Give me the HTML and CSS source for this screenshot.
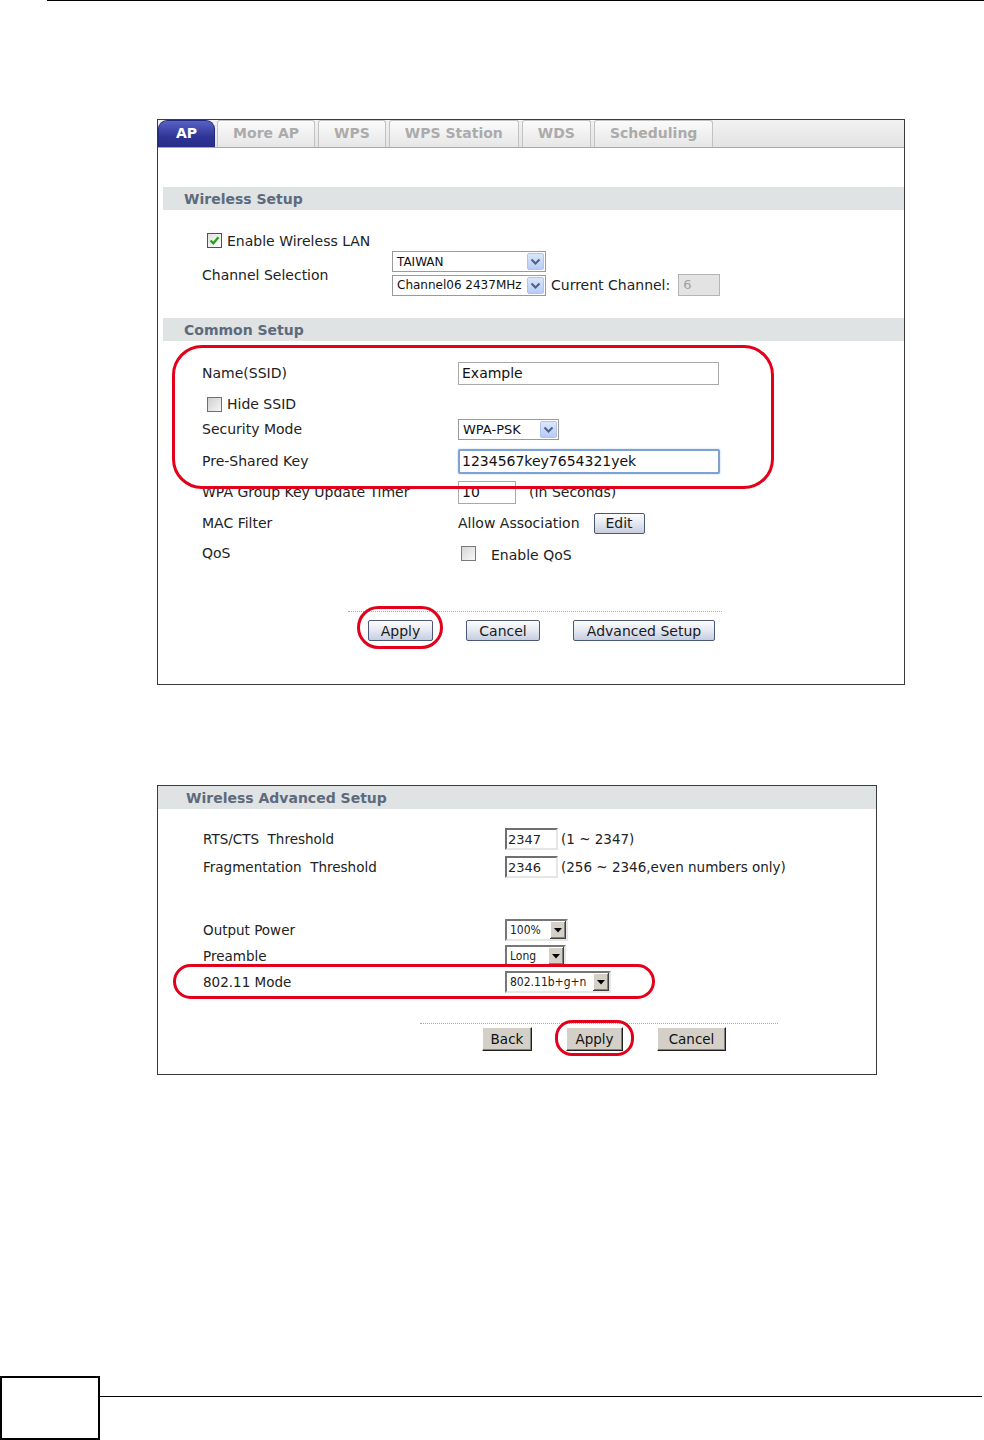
FILE: index.html
```html
<!DOCTYPE html>
<html>
<head>
<meta charset="utf-8">
<link rel="stylesheet" href="styles.css">
</head>
<body>
<div class="topline"></div>

<div class="panel p1">
  <div class="tabs">
    <div class="tab active">AP</div>
    <div class="tab">More AP</div>
    <div class="tab">WPS</div>
    <div class="tab">WPS Station</div>
    <div class="tab">WDS</div>
    <div class="tab">Scheduling</div>
  </div>

  <div class="sec-head inset">Wireless Setup</div>
  <div class="ws-body">
    <div class="chk-row">
      <span class="cb checked"><svg viewBox="0 0 13 13" width="13" height="13"><path d="M2.5 6.5 L5.3 9.3 L10.5 3.2" fill="none" stroke="#1fa31f" stroke-width="2.2"/></svg></span>
      <span>Enable Wireless LAN</span>
    </div>
    <div class="chan-row">
      <div class="lbl-ws">Channel Selection</div>
      <div class="chan-stack">
        <div class="xsel w154"><span>TAIWAN</span><span class="xarr"><svg viewBox="0 0 17 17" width="17" height="17"><polyline points="4.5,6.5 8.5,10.5 12.5,6.5" fill="none" stroke="#4d6185" stroke-width="2"/></svg></span></div>
        <div class="chan-line">
          <div class="xsel w154"><span>Channel06 2437MHz</span><span class="xarr"><svg viewBox="0 0 17 17" width="17" height="17"><polyline points="4.5,6.5 8.5,10.5 12.5,6.5" fill="none" stroke="#4d6185" stroke-width="2"/></svg></span></div>
          <span>Current Channel:</span>
          <div class="ro-input">6</div>
        </div>
      </div>
    </div>
  </div>

  <div class="sec-head inset cs-head">Common Setup</div>
  <div class="cs-rows">
    <div class="row"><div class="lbl">Name(SSID)</div><div class="tin w261">Example</div></div>
    <div class="row"><span class="cb cb-hide"></span><span class="cb-text">Hide SSID</span></div>
    <div class="row"><div class="lbl">Security Mode</div><div class="xsel w101 sel13"><span>WPA-PSK</span><span class="xarr"><svg viewBox="0 0 17 17" width="17" height="17"><polyline points="4.5,6.5 8.5,10.5 12.5,6.5" fill="none" stroke="#4d6185" stroke-width="2"/></svg></span></div></div>
    <div class="row"><div class="lbl">Pre-Shared Key</div><div class="tin w262 focus">1234567key7654321yek</div></div>
    <div class="row"><div class="lbl">WPA Group Key Update Timer</div><div class="tin w58">10</div><span class="after">(In Seconds)</span></div>
    <div class="row"><div class="lbl">MAC Filter</div><span>Allow Association</span><div class="btn w51 edit">Edit</div></div>
    <div class="row"><div class="lbl">QoS</div><span class="cb cb-qos"></span><span class="qos-text">Enable QoS</span></div>
  </div>

  <div class="dots d1"></div>
  <div class="btns b1">
    <div class="btn w65">Apply</div>
    <div class="btn w74">Cancel</div>
    <div class="btn w142">Advanced Setup</div>
  </div>

  <div class="ring ring-common"></div>
  <div class="ring ring-apply1"></div>
</div>

<div class="panel p2">
  <div class="sec-head adv-head">Wireless Advanced Setup</div>
  <div class="adv-rows">
    <div class="row2"><div class="lbl2">RTS/CTS&nbsp; Threshold</div><div class="cin">2347</div><span class="hint">(1 ~ 2347)</span></div>
    <div class="row2 g6"><div class="lbl2">Fragmentation&nbsp; Threshold</div><div class="cin">2346</div><span class="hint">(256 ~ 2346,even numbers only)</span></div>
    <div class="row2 g41"><div class="lbl2">Output Power</div><div class="csel w63"><span>100%</span><span class="carr"><svg viewBox="0 0 8 5" width="8" height="5"><polygon points="0,0 8,0 4,4.5" fill="#000"/></svg></span></div></div>
    <div class="row2 g4"><div class="lbl2">Preamble</div><div class="csel w61"><span>Long</span><span class="carr"><svg viewBox="0 0 8 5" width="8" height="5"><polygon points="0,0 8,0 4,4.5" fill="#000"/></svg></span></div></div>
    <div class="row2 g4"><div class="lbl2">802.11 Mode</div><div class="csel w106"><span>802.11b+g+n</span><span class="carr"><svg viewBox="0 0 8 5" width="8" height="5"><polygon points="0,0 8,0 4,4.5" fill="#000"/></svg></span></div></div>
  </div>
  <div class="dots d2"></div>
  <div class="btns b2">
    <div class="cbtn w50">Back</div>
    <div class="cbtn w57">Apply</div>
    <div class="cbtn w69">Cancel</div>
  </div>

  <div class="ring ring-mode"></div>
  <div class="ring ring-apply2"></div>
</div>

<div class="footer">
  <div class="pgbox"></div>
  <div class="fline"></div>
</div>
</body>
</html>
```

FILE: styles.css
```css
html, body {
  margin: 0;
  padding: 0;
  background: #fff;
}
body {
  font-family: "DejaVu Sans", Verdana, sans-serif;
  font-size: 14px;
  color: #222;
  overflow: hidden;
}

.topline {
  margin-left: 47px;
  border-top: 1px solid #000;
  height: 0;
}

.panel {
  position: relative;
  box-sizing: border-box;
  border: 1px solid #3a3a3a;
  background: #fff;
}
.p1 {
  margin: 118px 0 0 157px;
  width: 748px;
  height: 566px;
}

/* tabs */
.tabs {
  display: flex;
  gap: 3px;
  height: 28px;
  box-sizing: border-box;
  border-bottom: 1px solid #a8a8a8;
  background: linear-gradient(#f2f2f2, #e3e3e3);
}
.tab {
  display: flex;
  align-items: center;
  padding: 0 15px 2px;
  font-weight: bold;
  font-size: 14px;
  color: #ababab;
  background: linear-gradient(#fbfbfb, #e6e6e6);
  border: 1px solid #c2c2c2;
  border-bottom: none;
  border-radius: 3px 3px 0 0;
}
.tab.active {
  padding: 0 17px 2px;
  margin-right: -1px;
  color: #fff;
  background: linear-gradient(#5762c6, #2f3596 60%, #282d88);
  border-color: #23297c;
  border-radius: 9px 9px 0 0;
}

/* section headers */
.sec-head {
  height: 23px;
  display: flex;
  align-items: center;
  background: #dfe3e3;
  color: #5d6a7c;
  font-weight: bold;
  font-size: 14px;
}
.sec-head.inset {
  margin: 39px 0 0 5px;
  padding-left: 21px;
}
.sec-head.cs-head {
  margin-top: 22px;
}

/* wireless setup */
.ws-body {
  padding: 20px 0 0 44px;
}
.chk-row {
  display: flex;
  align-items: center;
  gap: 5px;
  height: 21px;
  padding-left: 5px;
}
.chan-row {
  display: flex;
  align-items: center;
}
.lbl-ws {
  width: 190px;
  flex: none;
  padding-top: 2px;
}
.chan-stack {
  display: flex;
  flex-direction: column;
  gap: 2px;
}
.chan-line {
  display: flex;
  align-items: center;
  gap: 5px;
}

/* checkbox */
.cb {
  display: inline-flex;
  width: 13px;
  height: 13px;
  flex: none;
  border: 1px solid #55606a;
  background: linear-gradient(135deg, #d8d8d4, #fafafa);
}
.cb.checked {
  border-color: #3d5a4a;
  background: linear-gradient(135deg, #e2e2de, #fff);
}
.cb-hide {
  margin-left: 5px;
  border-color: #6f6f6f;
  background: linear-gradient(135deg, #cfcfcf, #f6f6f6);
}
.cb-text {
  margin-left: 5px;
}
.cb-qos {
  margin-left: 3px;
  border-color: #7a7a7a;
  background: linear-gradient(135deg, #d6d6d6, #f8f8f8);
}
.qos-text {
  margin-left: 15px;
  padding-top: 4px;
}

/* XP selects */
.xsel {
  display: flex;
  align-items: center;
  height: 21px;
  box-sizing: border-box;
  border: 1px solid #9a9a9a;
  background: #fff;
  font-size: 12px;
  padding-left: 4px;
  color: #111;
}
.xsel.sel13 {
  font-size: 13px;
}
.xarr {
  margin-left: auto;
  width: 17px;
  height: 17px;
  margin-right: 1px;
  display: flex;
  box-sizing: border-box;
  background: linear-gradient(#dbe6fd, #b8cbf5);
  border: 1px solid #b0c3ea;
  border-radius: 2px;
}
.xarr svg {
  margin: -1px;
}
.w154 { width: 154px; }
.w101 { width: 101px; }

.ro-input {
  width: 42px;
  height: 22px;
  box-sizing: border-box;
  margin-left: 3px;
  border: 1px solid #b4b4b4;
  background: #e3e3e3;
  color: #a0a0a0;
  font-size: 13px;
  padding: 2px 0 0 4px;
}

/* common setup rows */
.cs-rows {
  display: flex;
  flex-direction: column;
  margin-top: 19px;
  padding-left: 44px;
}
.row {
  display: flex;
  align-items: center;
  height: 26px;
}
.row:nth-child(2) { margin-top: 5px; }
.row:nth-child(3) { margin-top: -1px; }
.row:nth-child(4) { margin-top: 6px; }
.row:nth-child(5) { margin-top: 5px; }
.row:nth-child(6) { margin-top: 5px; }
.row:nth-child(7) { margin-top: 4px; }
.lbl {
  width: 256px;
  flex: none;
}
.tin {
  height: 23px;
  box-sizing: border-box;
  border: 1px solid #a9a9a9;
  background: #fff;
  padding: 2px 0 0 3px;
  font-size: 14px;
  color: #111;
}
.tin.focus {
  height: 25px;
  border: 2px solid #7ea3d2;
  border-radius: 2px;
  padding: 2px 0 0 2px;
  box-shadow: 0 0 2px #a9c4e6;
}
.w261 { width: 261px; }
.w262 { width: 262px; }
.w58 { width: 58px; }
.after {
  margin-left: 13px;
}

/* XP buttons */
.btn {
  height: 21px;
  box-sizing: border-box;
  display: flex;
  align-items: center;
  justify-content: center;
  border: 1px solid #4b5877;
  border-radius: 2px;
  background: linear-gradient(#fdfdfe, #e6eaf2 45%, #c6cee0);
  font-size: 14px;
  color: #1a1a1a;
}
.btn.edit {
  margin-left: 14px;
}
.w51 { width: 51px; }
.w65 { width: 65px; }
.w74 { width: 74px; }
.w142 { width: 142px; }

.dots {
  height: 0;
  border-top: 1px dotted #a8a8a8;
}
.d1 {
  margin: 45px 0 0 190px;
  width: 374px;
}
.btns {
  display: flex;
}
.b1 {
  margin: 8px 0 0 210px;
  gap: 33px;
}

/* rings */
.ring {
  position: absolute;
  box-sizing: border-box;
  border: 3px solid #e2001a;
}
.ring-common {
  left: 14px;
  top: 225px;
  width: 602px;
  height: 144px;
  border-radius: 30px;
}
.ring-apply1 {
  left: 199px;
  top: 486px;
  width: 86px;
  height: 43px;
  border-radius: 22px;
}

/* panel 2 */
.p2 {
  margin: 100px 0 0 157px;
  width: 720px;
  height: 290px;
  font-size: 13.5px;
}
.sec-head.adv-head {
  padding-left: 28px;
}
.adv-rows {
  margin-top: 19px;
  padding-left: 45px;
}
.row2 {
  display: flex;
  align-items: center;
  height: 22px;
}
.g6 { margin-top: 6px; }
.g41 { margin-top: 41px; }
.g4 { margin-top: 4px; }
.lbl2 {
  width: 302px;
  flex: none;
}
.cin {
  width: 53px;
  height: 22px;
  box-sizing: border-box;
  border: 2px solid;
  border-color: #6f6f6f #e6e6e6 #e6e6e6 #6f6f6f;
  padding: 2px 0 0 1px;
  font-size: 13px;
}
.hint {
  margin-left: 3px;
}
.csel {
  display: flex;
  align-items: center;
  height: 22px;
  box-sizing: border-box;
  border: 2px solid;
  border-color: #777 #e6e6e6 #e6e6e6 #777;
  background: #fff;
  font-family: "DejaVu Sans Condensed", "DejaVu Sans", sans-serif;
  font-size: 12px;
  padding-left: 3px;
}
.carr {
  margin-left: auto;
  width: 16px;
  height: 18px;
  display: flex;
  align-items: center;
  justify-content: center;
  background: #d4d0c8;
  box-shadow: inset -1px -1px #404040, inset 1px 1px #fff, inset -2px -2px #808080;
}
.w63 { width: 63px; }
.w61 { width: 61px; }
.w106 { width: 106px; }

.d2 {
  margin: 30px 0 0 262px;
  width: 358px;
}
.b2 {
  margin: 3px 0 0 324px;
  gap: 34px;
}
.cbtn {
  height: 24px;
  box-sizing: border-box;
  display: flex;
  align-items: center;
  justify-content: center;
  background: #d4d0c8;
  border: 1px solid;
  border-color: #fff #202020 #202020 #fff;
  box-shadow: inset -1px -1px #808080;
  font-size: 13.5px;
  color: #111;
}
.w50 { width: 50px; }
.w57 { width: 57px; }
.w69 { width: 69px; }

.ring-mode {
  left: 15px;
  top: 178px;
  width: 482px;
  height: 35px;
  border-radius: 18px;
}
.ring-apply2 {
  left: 397px;
  top: 234px;
  width: 79px;
  height: 36px;
  border-radius: 17px;
}

/* footer */
.footer {
  display: flex;
  margin-top: 301px;
}
.pgbox {
  width: 100px;
  height: 64px;
  box-sizing: border-box;
  border: 2px solid #000;
  flex: none;
}
.fline {
  flex: 1;
  height: 0;
  margin: 20px 2px 0 0;
  border-top: 1px solid #000;
}
```
